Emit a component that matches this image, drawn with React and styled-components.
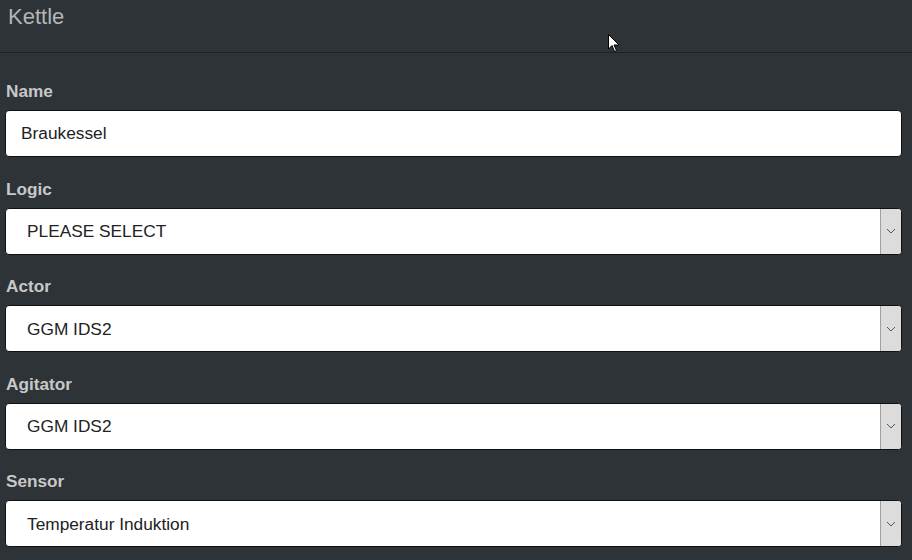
import React from "react";
import styled, { createGlobalStyle } from "styled-components";

const GlobalStyle = createGlobalStyle`
  html, body {
    margin: 0;
    padding: 0;
    background: #2e3337;
  }
  body {
    font-family: "Liberation Sans", Arial, sans-serif;
  }
`;

const Page = styled.div`
  position: relative;
  width: 912px;
  height: 560px;
  overflow: hidden;
  background: #2e3337;
`;

const Header = styled.div`
  height: 53px;
  border-bottom: 1px solid #1e2125;
  padding: 4px 8px 0;
  box-sizing: border-box;
  font-size: 22px;
  line-height: 26px;
  color: #b4b6b8;
`;

const Form = styled.div`
  padding: 29px 10px 0 5px;
`;

const Field = styled.div`
  margin-bottom: 22.5px;
`;

const Label = styled.div`
  font-size: 17.2px;
  font-weight: bold;
  line-height: 18px;
  color: #c8c8c8;
  margin: 0 0 10px 1px;
`;

const TextInput = styled.input`
  display: block;
  width: 100%;
  height: 47px;
  box-sizing: border-box;
  border: 1px solid #111;
  border-radius: 4px;
  background: #fff;
  padding: 0 15px;
  font-family: "Liberation Sans", Arial, sans-serif;
  font-size: 17.3px;
  color: #222;
  outline: none;
`;

const SelectWrap = styled.div`
  position: relative;
  height: 47px;
`;

const Select = styled.select`
  appearance: none;
  display: block;
  width: 100%;
  height: 47px;
  box-sizing: border-box;
  border: 1px solid #111;
  border-radius: 4px;
  background: #fff;
  padding: 0 21px;
  font-family: "Liberation Sans", Arial, sans-serif;
  font-size: 17.3px;
  color: #222;
  outline: none;
`;

const ArrowBox = styled.div`
  position: absolute;
  top: 1px;
  right: 1px;
  bottom: 1px;
  width: 20px;
  background: #dcdcdc;
  border-left: 1px solid #a0a0a0;
  border-radius: 0 3px 3px 0;
  display: flex;
  align-items: center;
  justify-content: center;
  pointer-events: none;
`;

const Cursor = styled.svg`
  position: absolute;
  left: 608px;
  top: 34px;
`;

const Chevron = () => (
  <svg width="10" height="6" viewBox="0 0 10 6">
    <path d="M1 1 L5 5 L9 1" fill="none" stroke="#555" strokeWidth="1" />
  </svg>
);

const SelectField = ({ label, value }) => (
  <Field>
    <Label>{label}</Label>
    <SelectWrap>
      <Select defaultValue={value}>
        <option>{value}</option>
      </Select>
      <ArrowBox>
        <Chevron />
      </ArrowBox>
    </SelectWrap>
  </Field>
);

const App = () => {
  return (
    <>
      <GlobalStyle />
      <Page>
        <Header>Kettle</Header>
        <Form>
          <Field>
            <Label>Name</Label>
            <TextInput defaultValue="Braukessel" />
          </Field>
          <SelectField label="Logic" value="PLEASE SELECT" />
          <SelectField label="Actor" value="GGM IDS2" />
          <SelectField label="Agitator" value="GGM IDS2" />
          <SelectField label="Sensor" value="Temperatur Induktion" />
        </Form>
        <Cursor width="12" height="19" viewBox="0 0 12 19">
          <path d="M0.5 0.5 L0.5 15 L4 11.5 L6.5 17.5 L8.5 16.5 L6 11 L11 11 Z" fill="#fff" stroke="#000" strokeWidth="1" />
        </Cursor>
      </Page>
    </>
  );
};

export default App;
